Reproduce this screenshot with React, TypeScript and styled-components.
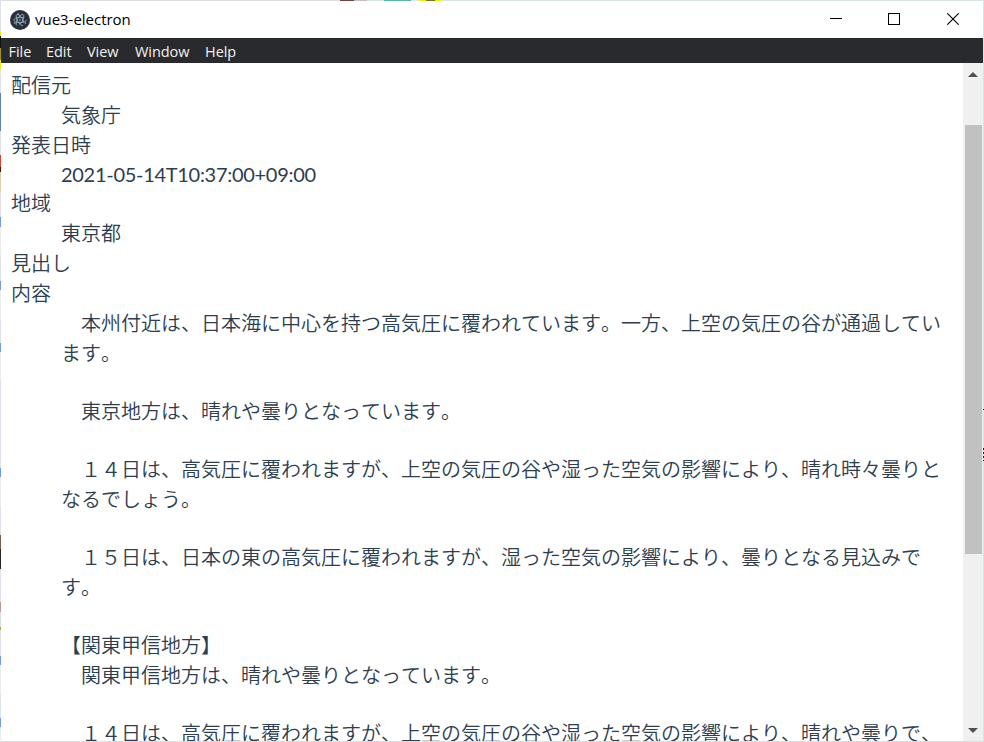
import React from "react";
import styled, { createGlobalStyle, css } from "styled-components";

const GlobalStyle = createGlobalStyle`
  *, *::before, *::after { box-sizing: border-box; }
  html, body { margin: 0; padding: 0; overflow: hidden; }
`;

const leftEdge = `linear-gradient(180deg,
  #dfe2ea 0 31px, #f5ee00 31px 36px, #14130a 36px 48px, #a09300 48px 60px, #f5ee00 60px 69px,
  #dfe2ea 69px 93px, #5d83b4 93px 131px, #dfe2ea 131px 155px, #d8472a 155px 167px, #3c1518 167px 172px,
  #d9d3ae 172px 192px, #dfe2ea 192px 217px, #6f9cf0 217px 227px, #ededed 227px 255px, #dfe2ea 255px 281px,
  #6f9cf0 281px 290px, #ededed 290px 319px, #dfe2ea 319px 343px, #6f9cf0 343px 352px, #ededed 352px 381px,
  #dfe2ea 381px 468px, #6f9cf0 468px 477px, #ededed 477px 506px, #dfe2ea 506px 535px, #7d5a48 535px 549px,
  #2a2225 549px 569px, #dfe2ea 569px 602px, #b99 602px 612px, #ddd 612px 627px, #c3a600 627px 630px,
  #dfe2ea 630px 656px, #6f9cf0 656px 665px, #ededed 665px 694px, #dfe2ea 694px 718px, #6f9cf0 718px 727px, #ededed 727px)`;

const topEdge = `linear-gradient(90deg,
  #d9dfe3 0 340px, #70443c 340px 354px, #c8bcc5 354px 367px, #d6e6e0 367px 384px, #52baa5 384px 411px,
  #d6e6e0 411px 420px, #f5ee00 420px 426px, #7e7a10 426px 435px, #f5ee00 435px 441px, #d6e6e0 441px)`;

const Desktop = styled.div`
  width: 984px;
  height: 742px;
  padding: 1px;
  background:
    ${leftEdge} 0 0 / 1px 742px no-repeat,
    ${topEdge} 0 0 / 984px 1px no-repeat,
    linear-gradient(#222, #222) 983px 409px / 1px 1px no-repeat,
    repeating-linear-gradient(180deg, #222 0 2px, #ddd 2px 4px) 983px 448px / 1px 13px no-repeat,
    linear-gradient(#dcdfe2, #dcdfe2) 0 741px / 984px 1px no-repeat,
    #d6e6e0;
`;

const AppWindow = styled.div`
  display: flex;
  flex-direction: column;
  height: 740px;
  background: #fff;
  overflow: hidden;
`;

const TitleBar = styled.header`
  display: flex;
  align-items: center;
  flex: 0 0 37px;
  padding: 0 1px 0 9px;
  background: #fff;
`;

const Title = styled.span`
  flex: 1;
  margin-left: 5px;
  padding-bottom: 2px;
  font: 15px/20px "Open Sans", "Noto Sans", sans-serif;
  letter-spacing: -0.02px;
  color: #000;
`;

const WindowButton = styled.button`
  display: flex;
  align-items: center;
  justify-content: center;
  width: 58.5px;
  height: 37px;
  padding: 0 0 2px;
  border: 0;
  background: none;
`;

const MenuBar = styled.nav`
  display: flex;
  align-items: center;
  flex: 0 0 25px;
  padding-left: 7.5px;
  gap: 15px;
  background: #292a2d;
`;

const MenuItem = styled.span<{ $width: number }>`
  width: ${(p) => p.$width}px;
  padding-top: 3px;
  white-space: nowrap;
  font: 14.5px/22px "Open Sans", "Noto Sans", sans-serif;
  letter-spacing: -0.05px;
  color: #f1f1f1;
`;

const Body = styled.div`
  display: flex;
  flex: 1;
  min-height: 0;
`;

const Content = styled.main`
  flex: 1;
  min-width: 0;
  padding: 7px 0 0 10px;
  overflow: hidden;
  color: #2c3e50;
  font: 350 20px/30px "Noto Sans CJK JP", sans-serif;
  font-kerning: none;
`;

const Report = styled.dl`
  margin: 0;
`;

const Term = styled.dt`
  height: 30px;
`;

const Detail = styled.dd<{ $latin?: boolean }>`
  margin: 0 0 0 50px;
  white-space: nowrap;
  ${(p) =>
    p.$latin &&
    css`
      font: 400 20px/28px Lato, sans-serif;
      letter-spacing: -0.29px;
      height: 28px;
    `}
`;

const Line = styled.div<{ $blank?: boolean }>`
  height: ${(p) => (p.$blank ? 28 : 30)}px;
  white-space: pre;
`;

const ScrollBar = styled.div`
  display: flex;
  flex-direction: column;
  align-items: center;
  flex: 0 0 20px;
  background: #f0f0f0;
`;

const ScrollArrow = styled.div`
  display: flex;
  align-items: center;
  justify-content: center;
  height: 22px;
`;

const ScrollTrack = styled.div`
  flex: 1;
  padding-top: 40px;
`;

const Thumb = styled.div`
  width: 17px;
  height: 429px;
  background: #c1c1c1;
`;

const ElectronLogo = () => (
  <svg width="20" height="20" viewBox="0 0 20 20">
    <circle cx="10" cy="10" r="10" fill="#2b2e3a" />
    <g fill="none" stroke="#a9d3e0" strokeOpacity="0.8" strokeWidth="0.8">
      <ellipse cx="10" cy="10" rx="6.2" ry="2.6" strokeDasharray="25 4" />
      <ellipse cx="10" cy="10" rx="6.2" ry="2.6" transform="rotate(60 10 10)" strokeDasharray="25 4" />
      <ellipse cx="10" cy="10" rx="6.2" ry="2.6" transform="rotate(120 10 10)" strokeDasharray="25 4" />
    </g>
    <g fill="#a9d3e0" fillOpacity="0.9">
      <circle cx="10" cy="10" r="0.8" />
      <circle cx="4.6" cy="13" r="0.8" />
      <circle cx="15.4" cy="13" r="0.8" />
      <circle cx="8.2" cy="4" r="0.8" />
    </g>
  </svg>
);

const menus = [
  { label: "File", width: 22.5 },
  { label: "Edit", width: 26 },
  { label: "View", width: 33 },
  { label: "Window", width: 55 },
  { label: "Help", width: 32 },
];

const lines = [
  "　本州付近は、日本海に中心を持つ高気圧に覆われています。一方、上空の気圧の谷が通過してい",
  "ます。",
  "",
  "　東京地方は、晴れや曇りとなっています。",
  "",
  "　１４日は、高気圧に覆われますが、上空の気圧の谷や湿った空気の影響により、晴れ時々曇りと",
  "なるでしょう。",
  "",
  "　１５日は、日本の東の高気圧に覆われますが、湿った空気の影響により、曇りとなる見込みで",
  "す。",
  "",
  "【関東甲信地方】",
  "　関東甲信地方は、晴れや曇りとなっています。",
  "",
  "　１４日は、高気圧に覆われますが、上空の気圧の谷や湿った空気の影響により、晴れや曇りで、",
];

export default function App() {
  return (
    <Desktop>
      <GlobalStyle />
      <AppWindow>
        <TitleBar>
          <ElectronLogo />
          <Title>vue3-electron</Title>
          <WindowButton aria-label="Minimize">
            <svg width="12" height="12" shapeRendering="crispEdges">
              <path d="M0 5.5H12" stroke="#000" />
            </svg>
          </WindowButton>
          <WindowButton aria-label="Maximize">
            <svg width="12" height="12" shapeRendering="crispEdges">
              <rect x="0.5" y="0.5" width="11" height="11" fill="none" stroke="#000" />
            </svg>
          </WindowButton>
          <WindowButton aria-label="Close">
            <svg width="12" height="12">
              <path d="M0.3 0.3L11.7 11.7M11.7 0.3L0.3 11.7" stroke="#000" strokeWidth="1.1" />
            </svg>
          </WindowButton>
        </TitleBar>
        <MenuBar>
          {menus.map((m) => (
            <MenuItem key={m.label} $width={m.width}>{m.label}</MenuItem>
          ))}
        </MenuBar>
        <Body>
          <Content lang="ja">
            <Report>
              <Term>配信元</Term>
              <Detail>気象庁</Detail>
              <Term>発表日時</Term>
              <Detail $latin>2021-05-14T10:37:00+09:00</Detail>
              <Term>地域</Term>
              <Detail>東京都</Detail>
              <Term>見出し</Term>
              <Term>内容</Term>
              <Detail>
                {lines.map((text, i) => (
                  <Line key={i} $blank={text === ""}>{text}</Line>
                ))}
              </Detail>
            </Report>
          </Content>
          <ScrollBar>
            <ScrollArrow>
              <svg width="10" height="5"><path d="M0 5L5 0L10 5Z" fill="#505050" /></svg>
            </ScrollArrow>
            <ScrollTrack>
              <Thumb />
            </ScrollTrack>
            <ScrollArrow>
              <svg width="10" height="5"><path d="M0 0L5 5L10 0Z" fill="#505050" /></svg>
            </ScrollArrow>
          </ScrollBar>
        </Body>
      </AppWindow>
    </Desktop>
  );
}
